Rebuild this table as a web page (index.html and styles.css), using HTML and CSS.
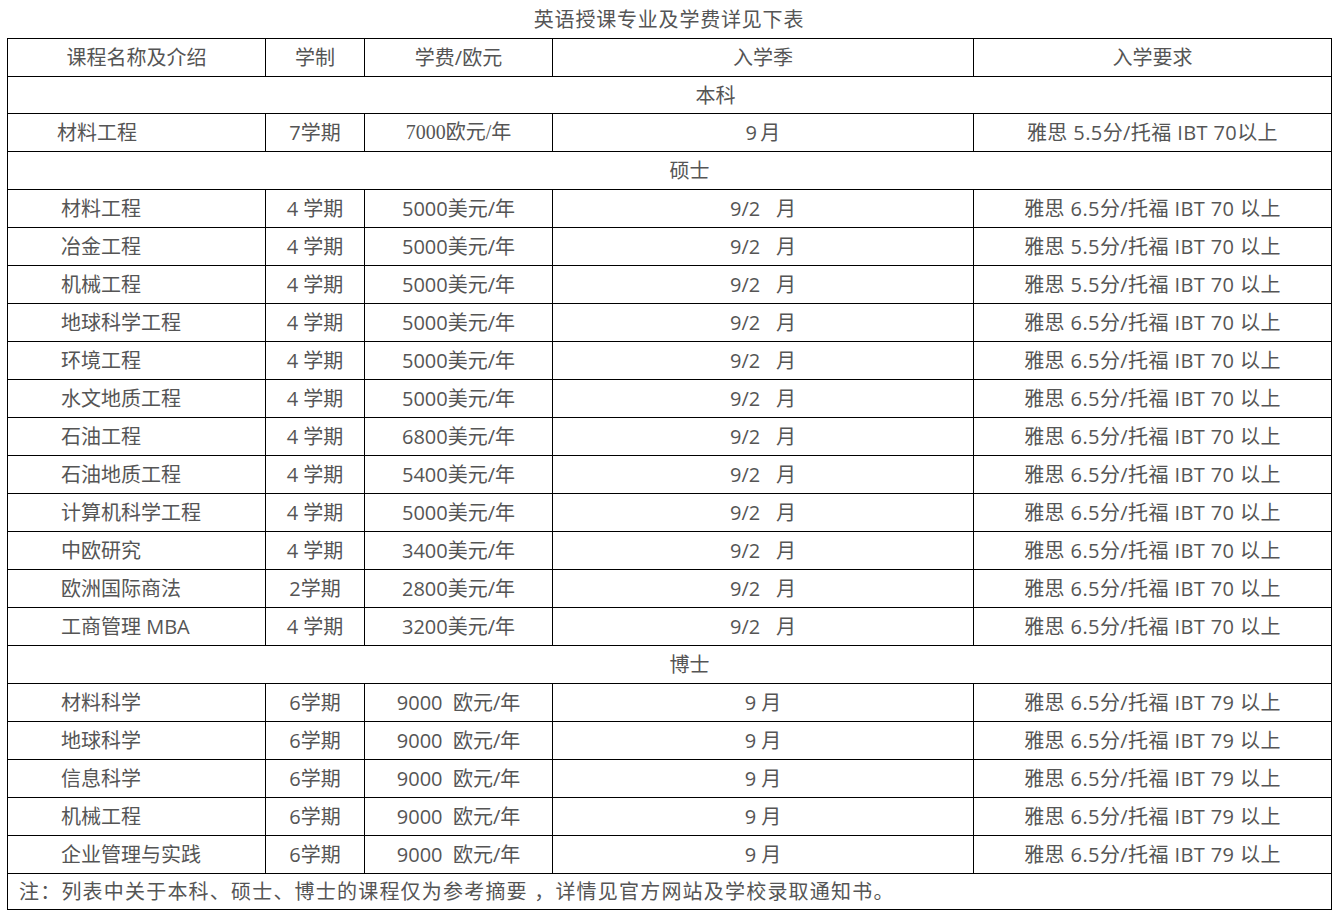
FILE: index.html
```html
<!DOCTYPE html>
<html lang="zh-CN">
<head>
<meta charset="utf-8">
<title>英语授课专业及学费详见下表</title>
<link rel="stylesheet" href="styles.css">
</head>
<body>
<div class="page">
  <div class="title">英语授课专业及学费详见下表</div>
  <table class="fees">
    <colgroup>
      <col class="c1"><col class="c2"><col class="c3"><col class="c4"><col class="c5">
    </colgroup>
    <tr class="head">
      <td>课程名称及介绍</td><td>学制</td><td>学费/欧元</td><td>入学季</td><td>入学要求</td>
    </tr>
    <tr><td colspan="5" class="sec sec-bk">本科</td></tr>
    <tr>
      <td class="name first">材料工程</td><td>7学期</td><td class="serif">7000欧元/年</td><td>9&#8201;月</td><td class="req">雅思 5.5分/托福 IBT 70以上</td>
    </tr>
    <tr><td colspan="5" class="sec">硕士</td></tr>
    <tr><td class="name">材料工程</td><td>4 学期</td><td>5000美元/年</td><td>9/2&nbsp;&nbsp; 月</td><td class="req">雅思 6.5分/托福 IBT 70 以上</td></tr>
    <tr><td class="name">冶金工程</td><td>4 学期</td><td>5000美元/年</td><td>9/2&nbsp;&nbsp; 月</td><td class="req">雅思 5.5分/托福 IBT 70 以上</td></tr>
    <tr><td class="name">机械工程</td><td>4 学期</td><td>5000美元/年</td><td>9/2&nbsp;&nbsp; 月</td><td class="req">雅思 5.5分/托福 IBT 70 以上</td></tr>
    <tr><td class="name">地球科学工程</td><td>4 学期</td><td>5000美元/年</td><td>9/2&nbsp;&nbsp; 月</td><td class="req">雅思 6.5分/托福 IBT 70 以上</td></tr>
    <tr><td class="name">环境工程</td><td>4 学期</td><td>5000美元/年</td><td>9/2&nbsp;&nbsp; 月</td><td class="req">雅思 6.5分/托福 IBT 70 以上</td></tr>
    <tr><td class="name">水文地质工程</td><td>4 学期</td><td>5000美元/年</td><td>9/2&nbsp;&nbsp; 月</td><td class="req">雅思 6.5分/托福 IBT 70 以上</td></tr>
    <tr><td class="name">石油工程</td><td>4 学期</td><td>6800美元/年</td><td>9/2&nbsp;&nbsp; 月</td><td class="req">雅思 6.5分/托福 IBT 70 以上</td></tr>
    <tr><td class="name">石油地质工程</td><td>4 学期</td><td>5400美元/年</td><td>9/2&nbsp;&nbsp; 月</td><td class="req">雅思 6.5分/托福 IBT 70 以上</td></tr>
    <tr><td class="name">计算机科学工程</td><td>4 学期</td><td>5000美元/年</td><td>9/2&nbsp;&nbsp; 月</td><td class="req">雅思 6.5分/托福 IBT 70 以上</td></tr>
    <tr><td class="name">中欧研究</td><td>4 学期</td><td>3400美元/年</td><td>9/2&nbsp;&nbsp; 月</td><td class="req">雅思 6.5分/托福 IBT 70 以上</td></tr>
    <tr><td class="name">欧洲国际商法</td><td>2学期</td><td>2800美元/年</td><td>9/2&nbsp;&nbsp; 月</td><td class="req">雅思 6.5分/托福 IBT 70 以上</td></tr>
    <tr><td class="name">工商管理 MBA</td><td>4 学期</td><td>3200美元/年</td><td>9/2&nbsp;&nbsp; 月</td><td class="req">雅思 6.5分/托福 IBT 70 以上</td></tr>
    <tr><td colspan="5" class="sec">博士</td></tr>
    <tr><td class="name">材料科学</td><td>6学期</td><td>9000&nbsp; 欧元/年</td><td>9 月</td><td class="req">雅思 6.5分/托福 IBT 79 以上</td></tr>
    <tr><td class="name">地球科学</td><td>6学期</td><td>9000&nbsp; 欧元/年</td><td>9 月</td><td class="req">雅思 6.5分/托福 IBT 79 以上</td></tr>
    <tr><td class="name">信息科学</td><td>6学期</td><td>9000&nbsp; 欧元/年</td><td>9 月</td><td class="req">雅思 6.5分/托福 IBT 79 以上</td></tr>
    <tr><td class="name">机械工程</td><td>6学期</td><td>9000&nbsp; 欧元/年</td><td>9 月</td><td class="req">雅思 6.5分/托福 IBT 79 以上</td></tr>
    <tr><td class="name">企业管理与实践</td><td>6学期</td><td>9000&nbsp; 欧元/年</td><td>9 月</td><td class="req">雅思 6.5分/托福 IBT 79 以上</td></tr>
    <tr><td colspan="5" class="note">注：列表中关于本科、硕士、博士的课程仅为参考摘要 ，详情见官方网站及学校录取通知书。</td></tr>
  </table>
</div>
</body>
</html>
```

FILE: styles.css
```css
html, body {
  margin: 0;
  padding: 0;
  background: #ffffff;
}

.page {
  padding: 0 7px;
  font-family: "Open Sans", "Noto Sans CJK SC", sans-serif;
  color: #555555;
  font-size: 20px;
}

.title {
  padding-top: 5px;
  line-height: 30px;
  height: 30px;
  margin-bottom: 3px;
  text-align: center;
  letter-spacing: 0.8px;
  width: 1324px;
}

.fees {
  border-collapse: collapse;
  width: 1324px;
  table-layout: fixed;
}

.c1 { width: 258px; }
.c2 { width: 99px; }
.c3 { width: 188px; }
.c4 { width: 421px; }
.c5 { width: 358px; }

.fees td {
  border: 1px solid #000000;
  height: 37px;
  padding: 0;
  text-align: center;
  vertical-align: middle;
  line-height: 23px;
  white-space: nowrap;
}

.fees td.name {
  text-align: left;
  padding-left: 53px;
}

.fees td.name.first {
  padding-left: 49px;
}

.fees td.req {
  letter-spacing: 0.4px;
}

.fees td.serif {
  font-family: "Liberation Serif", "Noto Sans CJK SC", serif;
}

.fees td.sec {
  padding-left: 40px;
}

.fees td.sec-bk {
  padding-left: 92px;
  height: 36px;
}

.fees td.note {
  text-align: left;
  padding-left: 11px;
  height: 35px;
  letter-spacing: 1.2px;
}
```
